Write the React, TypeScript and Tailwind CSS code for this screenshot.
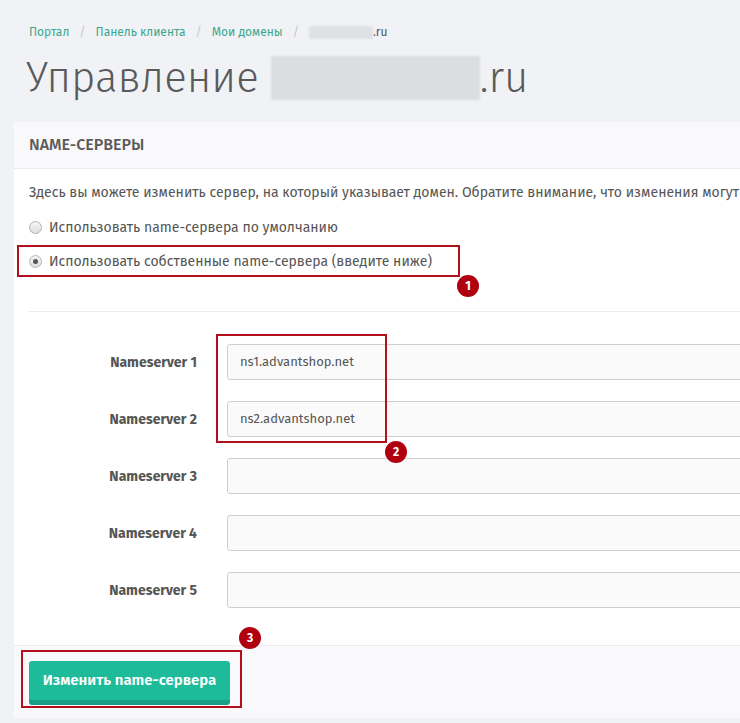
import React from "react";

const font = { fontFamily: '"Fira Sans", "Noto Sans", "Open Sans", sans-serif' };

function Radio({ checked }: { checked?: boolean }) {
  return (
    <span className="flex h-[13px] w-[13px] items-center justify-center rounded-full border border-[#b5b5b5] bg-gradient-to-b from-[#f4f4f4] to-[#dedede]">
      {checked && <span className="h-[5px] w-[5px] rounded-full bg-[#555]" />}
    </span>
  );
}

function Badge({ n, className }: { n: number; className: string }) {
  return (
    <span
      className={`absolute flex h-[22px] w-[22px] items-center justify-center rounded-full bg-[#b0000f] text-[12px] font-bold text-white ${className}`}
    >
      {n}
    </span>
  );
}

const servers = ["ns1.advantshop.net", "ns2.advantshop.net", "", "", ""];

export default function App() {
  return (
    <div className="relative h-[723px] w-[740px] overflow-hidden bg-[#f1f2f6] text-[#555]" style={font}>
      {/* Breadcrumbs */}
      <div className="mt-[24px] flex h-[16px] items-center pl-[29px] text-[12px]">
        <span className="text-[#3aa88f]">Портал</span>
        <span className="mx-[10px] text-[#c5c5c5]">/</span>
        <span className="text-[#3aa88f]">Панель клиента</span>
        <span className="mx-[10px] text-[#c5c5c5]">/</span>
        <span className="text-[#3aa88f]">Мои домены</span>
        <span className="mx-[10px] text-[#c5c5c5]">/</span>
        <span className="h-[13px] w-[64px] bg-[#e0e1e5] blur-[1px]" />
        <span>.ru</span>
      </div>

      {/* Title */}
      <h1 className="mt-[13px] flex h-[50px] items-center pl-[26px] text-[42px] font-light leading-none text-[#5a5a5a]">
        <span>Управление</span>
        <span className="ml-[12px] h-[44px] w-[209px] bg-[#dcdde1] blur-[1px]" />
        <span>.ru</span>
      </h1>

      {/* Panel */}
      <div className="ml-[14px] mt-[19px] w-[900px] bg-white">
        <div className="flex h-[47px] items-center border-b border-[#ebebef] bg-[#f9f9fb] px-[15px] text-[16px] font-medium uppercase text-[#5a5a5a]">
          name-серверы
        </div>

        <div className="px-[15px] pt-[14px]">
          <p className="whitespace-nowrap text-[14px] leading-[20px]">
            Здесь вы можете изменить сервер, на который указывает домен. Обратите внимание, что изменения могут
          </p>
          <label className="mt-[14px] flex h-[20px] items-center gap-[7px] text-[14px]">
            <Radio />
            <span>Использовать name-сервера по умолчанию</span>
          </label>
          <label className="mt-[14px] flex h-[20px] items-center gap-[7px] text-[14px]">
            <Radio checked />
            <span>Использовать собственные name-сервера (введите ниже)</span>
          </label>

          <div className="mt-[40px] border-t border-[#eaeaea] pb-[37px] pt-[32px]">
            <div className="flex flex-col gap-[21px]">
              {servers.map((v, i) => (
                <div key={i} className="flex items-center gap-[30px]">
                  <div className="w-[168px] text-right text-[14px] font-bold text-[#555]">Nameserver {i + 1}</div>
                  <div className="flex h-[36px] flex-1 items-center rounded-[3px] border border-[#cfcfcf] bg-[#fafafa] px-[12px] text-[13px] text-[#555]">
                    {v}
                  </div>
                </div>
              ))}
            </div>
          </div>
        </div>

        <div className="border-t border-[#ececf0] bg-[#f9f9fb] px-[15px] pb-[13px] pt-[15px]">
          <button className="h-[44px] w-[201px] rounded-[3px] border-b-[5px] border-[#17a084] bg-[#1dbb9a] text-[15px] font-semibold text-white">
            Изменить name-сервера
          </button>
        </div>
      </div>

      {/* Annotations */}
      <div className="absolute left-[17px] top-[245px] h-[32px] w-[443px] border-2 border-[#b3101d]" />
      <div className="absolute left-[216px] top-[334px] h-[109px] w-[171px] border-2 border-[#b3101d]" />
      <div className="absolute left-[21px] top-[650px] h-[58px] w-[221px] border-2 border-[#b3101d]" />
      <Badge n={1} className="left-[457px] top-[275px]" />
      <Badge n={2} className="left-[385px] top-[441px]" />
      <Badge n={3} className="left-[239px] top-[627px]" />
    </div>
  );
}
